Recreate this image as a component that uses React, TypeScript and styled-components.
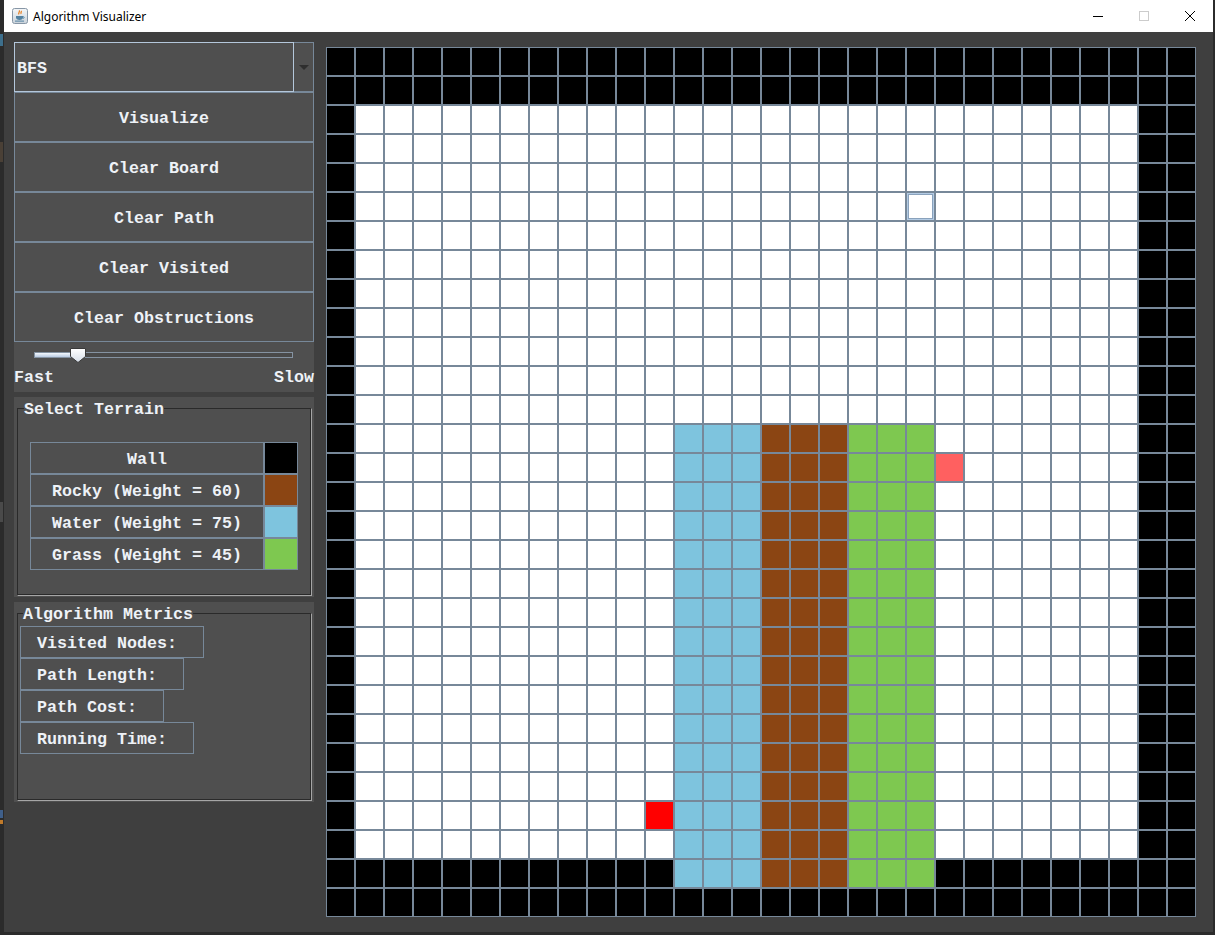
import React from 'react';
import styled, { createGlobalStyle } from 'styled-components';

const MONO = `"Liberation Mono", "Courier New", monospace`;
const LINE = '#778899';
const PANEL = '#4f4f4f';
const TEXT = '#eef2f7';

const Global = createGlobalStyle`
  html, body { margin: 0; padding: 0; background: #2b2b2b; }
  body { width: 1215px; height: 935px; overflow: hidden; }
  * { box-sizing: border-box; }
`;

const Screen = styled.div`
  display: flex;
  width: 1215px;
  height: 935px;
  background: #2b2b2b;
`;

const BehindStrip = styled.div`
  width: 4px;
  flex: none;
  display: flex;
  flex-direction: column;
  background: #2b2b2b;
`;

const BehindBit = styled.div<{ $top: number; $h: number; $color: string }>`
  margin-top: ${(p) => p.$top}px;
  height: ${(p) => p.$h}px;
  width: 3px;
  background: ${(p) => p.$color};
`;

const Window = styled.div`
  flex: 1;
  display: flex;
  flex-direction: column;
  margin: 0 2px 3px 0;
  background: #3f3f3f;
`;

const TitleBar = styled.div`
  height: 32px;
  flex: none;
  display: flex;
  align-items: center;
  background: #ffffff;
`;

const AppIcon = styled.svg`
  margin-left: 8px;
  width: 16px;
  height: 16px;
  flex: none;
`;

const Title = styled.div`
  margin-left: 5px;
  font-family: "Noto Sans", "Open Sans", sans-serif;
  font-size: 12px;
  color: #000;
  flex: 1;
`;

const Controls = styled.div`
  display: flex;
  height: 100%;
`;

const ControlBox = styled.div`
  width: 46px;
  height: 100%;
  display: flex;
  align-items: center;
  justify-content: center;
`;

const Content = styled.div`
  flex: 1;
  display: flex;
  align-items: flex-start;
  padding: 10px 0 0 10px;
`;

const LeftColumn = styled.div`
  width: 300px;
  flex: none;
  display: flex;
  flex-direction: column;
`;

const Combo = styled.div`
  display: flex;
  height: 50px;
`;

const ComboField = styled.div`
  flex: 1;
  display: flex;
  align-items: center;
  padding: 2px 0 0 2px;
  border: 1px solid #b4c7db;
  background: ${PANEL};
  font-family: ${MONO};
  font-weight: bold;
  font-size: 16.67px;
  color: ${TEXT};
`;

const ComboArrow = styled.div`
  width: 20px;
  display: flex;
  align-items: center;
  justify-content: center;
  border: 1px solid ${LINE};
  border-left: none;
  background: ${PANEL};
`;

const Caret = styled.div`
  width: 0;
  height: 0;
  border-left: 5px solid transparent;
  border-right: 5px solid transparent;
  border-top: 5px solid #2e2e2e;
`;

const ActionButton = styled.div`
  height: 50px;
  display: flex;
  align-items: center;
  justify-content: center;
  border: 1px solid ${LINE};
  background: ${PANEL};
  font-family: ${MONO};
  font-weight: bold;
  font-size: 16.67px;
  color: ${TEXT};
  padding-top: 3px;
`;

const SliderPanel = styled.div`
  height: 50px;
  background: ${PANEL};
  display: flex;
  flex-direction: column;
`;

const Track = styled.div`
  position: relative;
  margin: 10px 0 0 20px;
  width: 259px;
  height: 6px;
  border: 1px solid #8593a2;
  background: #4a4a4a;
`;

const TrackFill = styled.div`
  height: 100%;
  background: linear-gradient(#f4f8fd, #b9cbe3);
`;

const Thumb = styled.svg`
  position: absolute;
  top: -5px;
  width: 16px;
  height: 15px;
`;

const SpeedLabels = styled.div`
  display: flex;
  justify-content: space-between;
  margin-top: 10px;
  font-family: ${MONO};
  font-weight: bold;
  font-size: 16.67px;
  line-height: 19px;
  color: ${TEXT};
`;

const Group = styled.div<{ $gap: number }>`
  margin-top: ${(p) => p.$gap}px;
  height: 200px;
  background: ${PANEL};
  display: flex;
  flex-direction: column;
`;

const Frame = styled.fieldset<{ $pad: number }>`
  flex: 1;
  min-height: 0;
  margin: 0 2px 1px 3px;
  padding: 0 0 0 ${(p) => p.$pad}px;
  border: 1px solid;
  border-color: #2a2a2a #a6a6a6 #a6a6a6 #2a2a2a;
  box-shadow: inset -1px -1px 0 #2a2a2a;
  min-width: 0;
`;

const Legend = styled.legend<{ $shift: number }>`
  padding: 4px 0 0 0;
  margin-left: ${(p) => p.$shift}px;
  font-family: ${MONO};
  font-weight: bold;
  font-size: 16.67px;
  line-height: 18px;
  color: ${TEXT};
`;

const TerrainList = styled.div`
  margin: 23px 0 0 6px;
  display: flex;
  flex-direction: column;
`;

const TerrainRow = styled.div`
  display: flex;
`;

const TerrainLabel = styled.div`
  width: 234px;
  height: 32px;
  display: flex;
  align-items: center;
  justify-content: center;
  border: 1px solid ${LINE};
  font-family: ${MONO};
  font-weight: bold;
  font-size: 16.67px;
  color: ${TEXT};
  white-space: pre;
  padding-top: 2px;
`;

const Swatch = styled.div<{ $color: string }>`
  width: 34px;
  height: 32px;
  border: 1px solid ${LINE};
  background: ${(p) => p.$color};
`;

const MetricList = styled.div`
  margin-top: 2px;
  display: flex;
  flex-direction: column;
  align-items: flex-start;
`;

const MetricLabel = styled.div`
  height: 32px;
  display: flex;
  align-items: center;
  padding: 2px 26px 0 16px;
  border: 1px solid ${LINE};
  font-family: ${MONO};
  font-weight: bold;
  font-size: 16.67px;
  color: ${TEXT};
  white-space: pre;
`;

const Board = styled.div`
  margin: 5px 0 0 12px;
  display: grid;
  grid-template-columns: repeat(30, 27px);
  grid-auto-rows: 27px;
  gap: 2px;
  padding: 1px;
  background: ${LINE};
`;

type Kind = 'wall' | 'empty' | 'water' | 'rocky' | 'grass' | 'start' | 'end' | 'focus';

const CELL_COLORS: Record<Kind, string> = {
  wall: '#000000',
  empty: '#ffffff',
  water: '#7ec4de',
  rocky: '#8b4513',
  grass: '#7ec850',
  start: '#ff0000',
  end: '#ff6060',
  focus: '#ffffff',
};

const Cell = styled.div<{ $kind: Kind }>`
  background: ${(p) => CELL_COLORS[p.$kind]};
  box-shadow: ${(p) =>
    p.$kind === 'focus' ? 'inset 0 0 0 1px #b3cbe4, inset 0 0 0 2px #8aa2bc' : 'none'};
`;

const kindAt = (r: number, c: number): Kind => {
  if (r === 26 && c === 11) return 'start';
  if (r === 14 && c === 21) return 'end';
  if (r === 5 && c === 20) return 'focus';
  if (r >= 13 && r <= 28) {
    if (c >= 12 && c <= 14) return 'water';
    if (c >= 15 && c <= 17) return 'rocky';
    if (c >= 18 && c <= 20) return 'grass';
  }
  if (r <= 1 || r >= 28 || c === 0 || c >= 28) return 'wall';
  return 'empty';
};

const cells: Kind[] = [];
for (let r = 0; r < 30; r++) for (let c = 0; c < 30; c++) cells.push(kindAt(r, c));

const buttons = ['Visualize', 'Clear Board', 'Clear Path', 'Clear Visited', 'Clear Obstructions'];

const terrains = [
  { label: 'Wall', color: '#000000' },
  { label: 'Rocky (Weight = 60)', color: '#8b4513' },
  { label: 'Water (Weight = 75)', color: '#7ec4de' },
  { label: 'Grass (Weight = 45)', color: '#7ec850' },
];

const metrics = ['Visited Nodes:', 'Path Length:', 'Path Cost:', 'Running Time:'];

export default function App() {
  return (
    <>
      <Global />
      <Screen>
        <BehindStrip>
          <BehindBit $top={34} $h={12} $color="#3d6f8c" />
          <BehindBit $top={96} $h={20} $color="#4a4036" />
          <BehindBit $top={340} $h={20} $color="#4a4a4a" />
          <BehindBit $top={288} $h={8} $color="#3f5f8a" />
          <BehindBit $top={2} $h={4} $color="#c07a2a" />
        </BehindStrip>
        <Window>
          <TitleBar>
            <AppIcon viewBox="0 0 16 16">
              <defs>
                <linearGradient id="frameg" x1="0" y1="0" x2="0" y2="1">
                  <stop offset="0" stopColor="#f4f6f8" />
                  <stop offset="1" stopColor="#c9d2da" />
                </linearGradient>
              </defs>
              <rect x="0.5" y="0.5" width="15" height="15" rx="2" fill="url(#frameg)" stroke="#8796a6" />
              <path d="M7 2.5c1.5 1.2-1.2 2.2 0 3.8M9 3c1 1-0.8 1.6 0.2 2.8" stroke="#e76f00" strokeWidth="1.1" fill="none" />
              <path d="M4 8h7v1.5c0 1.6-1.4 2.5-3.5 2.5S4 11.1 4 9.5z" fill="#5382a1" />
              <path d="M11 8.6c1.6 0 1.6 1.8 0 1.8" stroke="#5382a1" strokeWidth="0.9" fill="none" />
              <rect x="3" y="12.6" width="9" height="1" fill="#5382a1" />
            </AppIcon>
            <Title>Algorithm Visualizer</Title>
            <Controls>
              <ControlBox>
                <svg width="10" height="10" viewBox="0 0 10 10">
                  <rect x="0" y="5" width="10" height="1" fill="#000" />
                </svg>
              </ControlBox>
              <ControlBox>
                <svg width="10" height="10" viewBox="0 0 10 10">
                  <rect x="0.5" y="0.5" width="9" height="9" fill="none" stroke="#cccccc" />
                </svg>
              </ControlBox>
              <ControlBox>
                <svg width="10" height="10" viewBox="0 0 10 10">
                  <path d="M0 0L10 10M10 0L0 10" stroke="#000" strokeWidth="1" />
                </svg>
              </ControlBox>
            </Controls>
          </TitleBar>
          <Content>
            <LeftColumn>
              <Combo>
                <ComboField>BFS</ComboField>
                <ComboArrow>
                  <Caret />
                </ComboArrow>
              </Combo>
              {buttons.map((b) => (
                <ActionButton key={b}>{b}</ActionButton>
              ))}
              <SliderPanel>
                <Track>
                  <TrackFill style={{ width: '43px' }} />
                  <Thumb viewBox="0 0 16 15" style={{ left: '35px' }}>
                    <defs>
                      <linearGradient id="thumbg" x1="0" y1="0" x2="0" y2="1">
                        <stop offset="0" stopColor="#ffffff" />
                        <stop offset="1" stopColor="#d5dde7" />
                      </linearGradient>
                    </defs>
                    <path d="M0.5 0.5H15.5V8.5L8 14.5L0.5 8.5Z" fill="url(#thumbg)" stroke="#3a3a3a" />
                  </Thumb>
                </Track>
                <SpeedLabels>
                  <span>Fast</span>
                  <span>Slow</span>
                </SpeedLabels>
              </SliderPanel>
              <Group $gap={5}>
                <Frame $pad={6}>
                  <Legend $shift={0}>Select Terrain</Legend>
                  <TerrainList>
                    {terrains.map((t) => (
                      <TerrainRow key={t.label}>
                        <TerrainLabel>{t.label}</TerrainLabel>
                        <Swatch $color={t.color} />
                      </TerrainRow>
                    ))}
                  </TerrainList>
                </Frame>
              </Group>
              <Group $gap={5}>
                <Frame $pad={2}>
                  <Legend $shift={3}>Algorithm Metrics</Legend>
                  <MetricList>
                    {metrics.map((m) => (
                      <MetricLabel key={m}>{m}</MetricLabel>
                    ))}
                  </MetricList>
                </Frame>
              </Group>
            </LeftColumn>
            <Board>
              {cells.map((k, i) => (
                <Cell key={i} $kind={k} />
              ))}
            </Board>
          </Content>
        </Window>
      </Screen>
    </>
  );
}
